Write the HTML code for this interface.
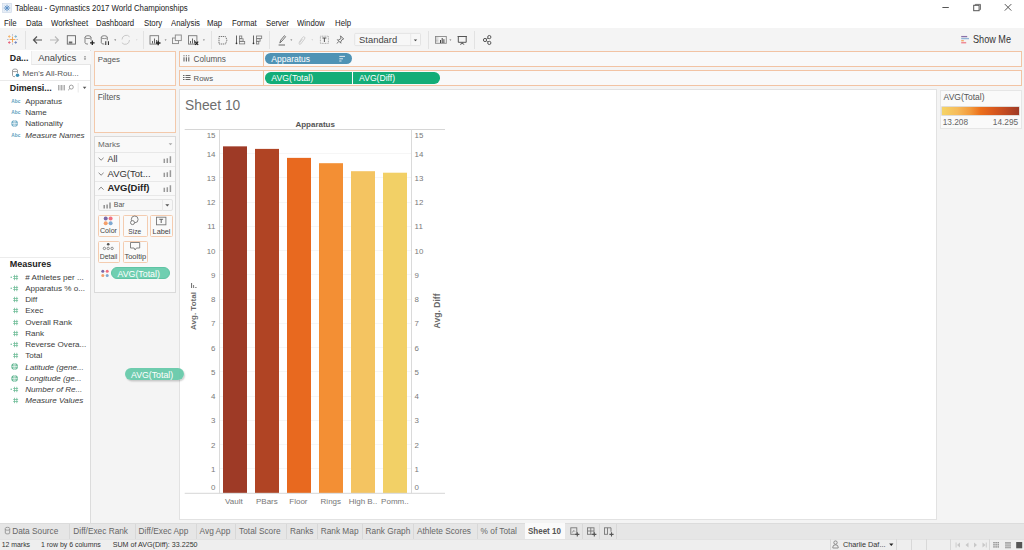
<!DOCTYPE html>
<html><head><meta charset="utf-8">
<style>
*{margin:0;padding:0;box-sizing:border-box}
html,body{width:1024px;height:550px;overflow:hidden;background:#fff;font-family:"Liberation Sans",sans-serif;color:#333}
.a{position:absolute;white-space:nowrap}
.t{position:absolute;white-space:nowrap;line-height:1}
</style></head><body>
<div class="a" style="left:0;top:0;width:1024px;height:550px;background:#fff" id="root">

<!-- title bar -->
<div class="t" style="left:14.6px;top:4px;font-size:9.2px;color:#222;transform:scaleX(0.848);transform-origin:0 0">Tableau - Gymnastics 2017 World Championships</div>

<!-- menu -->
<div class="t" style="left:4.4px;top:19px;font-size:9.2px;color:#222;transform:scaleX(0.848);transform-origin:0 0">File</div>
<div class="t" style="left:25.5px;top:19px;font-size:9.2px;color:#222;transform:scaleX(0.848);transform-origin:0 0">Data</div>
<div class="t" style="left:51px;top:19px;font-size:9.2px;color:#222;transform:scaleX(0.848);transform-origin:0 0">Worksheet</div>
<div class="t" style="left:96.3px;top:19px;font-size:9.2px;color:#222;transform:scaleX(0.848);transform-origin:0 0">Dashboard</div>
<div class="t" style="left:143.8px;top:19px;font-size:9.2px;color:#222;transform:scaleX(0.848);transform-origin:0 0">Story</div>
<div class="t" style="left:170.5px;top:19px;font-size:9.2px;color:#222;transform:scaleX(0.848);transform-origin:0 0">Analysis</div>
<div class="t" style="left:207.2px;top:19px;font-size:9.2px;color:#222;transform:scaleX(0.848);transform-origin:0 0">Map</div>
<div class="t" style="left:231.8px;top:19px;font-size:9.2px;color:#222;transform:scaleX(0.848);transform-origin:0 0">Format</div>
<div class="t" style="left:265.6px;top:19px;font-size:9.2px;color:#222;transform:scaleX(0.848);transform-origin:0 0">Server</div>
<div class="t" style="left:296.5px;top:19px;font-size:9.2px;color:#222;transform:scaleX(0.848);transform-origin:0 0">Window</div>
<div class="t" style="left:334.7px;top:19px;font-size:9.2px;color:#222;transform:scaleX(0.848);transform-origin:0 0">Help</div>

<!-- toolbar -->
<div class="a" style="left:0;top:28px;width:1024px;height:22px;background:#f4f4f4"></div>
<svg class="a" style="left:0;top:0" width="1024" height="50" viewBox="0 0 1024 50">
<!-- app icon -->
<rect x="2.5" y="3.5" width="9" height="9" fill="#e8eef6" stroke="#c9d6e6" stroke-width="0.6"/>
<g stroke="#5a8fc6" stroke-width="0.9" fill="none"><path d="M7 4.8v6.4M3.8 8h6.4M4.8 5.8l4.4 4.4M9.2 5.8l-4.4 4.4"/></g>
<!-- window controls -->
<path d="M942.4 7.5h6.4" stroke="#555" stroke-width="1"/>
<rect x="973.7" y="5.3" width="5.4" height="5.4" fill="none" stroke="#555" stroke-width="1"/>
<path d="M975.3 5.3v-0.9h5.2v5.2h-0.9" fill="none" stroke="#555" stroke-width="0.8"/>
<path d="M1004.8 4.1l6.5 6.5M1011.3 4.1l-6.5 6.5" stroke="#555" stroke-width="1"/>
<!-- separators -->
<g stroke="#e2e2e2" stroke-width="1"><path d="M25.5 31v18M143.5 31v18M211.5 31v18M269.5 31v18M428.5 31v18M474.5 31v18"/></g>
<!-- tableau logo -->
<g stroke-width="0.9" stroke-linecap="butt">
<path d="M12.5 36.6v5.8M9.6 39.5h5.8" stroke="#f0a04b"/>
<path d="M9.3 35.2v2.6M8 36.5h2.6" stroke="#f4b36b"/>
<path d="M15.7 35.2v2.6M14.4 36.5h2.6" stroke="#7cb3cf"/>
<path d="M9.3 41.2v2.6M8 42.5h2.6" stroke="#e8637a"/>
<path d="M15.7 41.2v2.6M14.4 42.5h2.6" stroke="#6c82bd"/>
<path d="M12.5 34.3v1.3M12.5 43.4v1.3M7.2 39.5h1.3M16.5 39.5h1.3" stroke="#9aa6c8"/>
</g>
<!-- back / forward -->
<path d="M42 40h-8.5M37 36.5l-3.5 3.5 3.5 3.5" fill="none" stroke="#555" stroke-width="1.2"/>
<path d="M50 40h8.5M55 36.5l3.5 3.5-3.5 3.5" fill="none" stroke="#b8b8b8" stroke-width="1.1"/>
<!-- save -->
<rect x="67.3" y="35.7" width="8.2" height="8.4" fill="none" stroke="#666" stroke-width="0.9"/>
<rect x="68.8" y="41.5" width="3.5" height="2" fill="#666"/>
<!-- new datasource -->
<path d="M85 37.3v5.5q0 1.3 3 1.3M85 37.3q0-1.6 3-1.6q3 0 3 1.6v3" fill="none" stroke="#777" stroke-width="0.9"/>
<path d="M85 37.3q0 1.3 3 1.3q3 0 3-1.3" fill="none" stroke="#777" stroke-width="0.8"/>
<path d="M92.3 40.5v4.6M90 42.8h4.6" stroke="#222" stroke-width="1.3"/>
<!-- pause datasource -->
<path d="M101.3 37.3v5.5q0 1.3 3 1.3M101.3 37.3q0-1.6 3-1.6q3 0 3 1.6v3" fill="none" stroke="#777" stroke-width="0.9"/>
<path d="M101.3 37.3q0 1.3 3 1.3q3 0 3-1.3" fill="none" stroke="#777" stroke-width="0.8"/>
<path d="M105.9 41.3v3.7M108.3 41.3v3.7" stroke="#222" stroke-width="1.2"/><path d="M107.1 41.3v3.7" stroke="#f4f4f4" stroke-width="1.1"/>
<path d="M114.2 39.5h2l-1 1.2z" fill="#555"/>
<!-- refresh -->
<path d="M122 39.5a4.3 4.3 0 0 1 7.6-2.7M129.5 40a4.3 4.3 0 0 1-7.6 2.8" fill="none" stroke="#c4c4c4" stroke-width="0.9"/>
<path d="M136 39.6h1.5l-.75.9z" fill="#c4c4c4"/>
<!-- new worksheet -->
<rect x="150" y="35.7" width="8.6" height="8.4" fill="none" stroke="#777" stroke-width="0.9"/>
<path d="M152.5 43.5v-2.5M154.5 43.5v-5M156.5 43.5v-3.5" stroke="#555" stroke-width="0.9"/>
<path d="M158.2 40.7v4.6M155.9 43h4.6" stroke="#222" stroke-width="1.3"/>
<path d="M164.6 39.5h2l-1 1.2z" fill="#666"/>
<!-- duplicate -->
<rect x="172.5" y="38" width="6" height="5.6" fill="#f4f4f4" stroke="#888" stroke-width="0.9"/>
<rect x="175.3" y="35" width="6" height="5.6" fill="#f4f4f4" stroke="#888" stroke-width="0.9"/>
<!-- clear sheet -->
<rect x="188.5" y="35.7" width="8.4" height="8.4" fill="none" stroke="#777" stroke-width="0.9"/>
<path d="M190.5 43.5v-2.5M192.5 43.5v-5M194.5 43.5v-3.5" stroke="#555" stroke-width="0.9"/>
<path d="M195 41.6l3.2 3.2M198.2 41.6l-3.2 3.2" stroke="#222" stroke-width="1.2"/>
<path d="M202.9 39.5h2l-1 1.2z" fill="#666"/>
<!-- swap -->
<path d="M219 36.5h6.5l1.5 3.5-1.5 4h-6.5z" fill="none" stroke="#777" stroke-width="1" stroke-dasharray="1.3 0.7"/>
<!-- sort asc -->
<path d="M236.5 35.5v7.8" stroke="#555" stroke-width="0.9"/><circle cx="236.5" cy="43.3" r="0.9" fill="#333"/>
<rect x="239.5" y="36" width="2.3" height="2.5" fill="none" stroke="#777" stroke-width="0.8"/>
<rect x="239.5" y="38.8" width="3.6" height="2.4" fill="none" stroke="#777" stroke-width="0.8"/>
<rect x="239.5" y="41.5" width="5.2" height="2.4" fill="none" stroke="#777" stroke-width="0.8"/>
<!-- sort desc -->
<path d="M253.5 35.5v7.8" stroke="#555" stroke-width="0.9"/><circle cx="253.5" cy="43.3" r="0.9" fill="#333"/>
<rect x="256.5" y="36" width="5.2" height="2.4" fill="none" stroke="#777" stroke-width="0.8"/>
<rect x="256.5" y="38.8" width="3.6" height="2.4" fill="none" stroke="#777" stroke-width="0.8"/>
<rect x="256.5" y="41.5" width="2.3" height="2.5" fill="none" stroke="#777" stroke-width="0.8"/>
<!-- highlight pen -->
<path d="M279.8 43l1-3 3.6-4.3 1.2 1-3.6 4.3z" fill="none" stroke="#666" stroke-width="0.9"/>
<path d="M278.6 45h6.4" stroke="#666" stroke-width="1"/>
<path d="M290.3 39.5h2l-1 1.2z" fill="#666"/>
<!-- paperclip -->
<path d="M299 42.5l3.5-5q1-1.3 2-.5q.9.8 0 2l-3.8 5q-.6.8-1.3.3q-.6-.5 0-1.3l3-4" fill="none" stroke="#c8c8c8" stroke-width="0.9"/>
<path d="M311.5 39.6h1.6l-.8.9z" fill="#bbb"/>
<!-- [T] -->
<rect x="320.4" y="36.2" width="8" height="7.2" fill="none" stroke="#999" stroke-width="0.8" stroke-dasharray="1 0.6"/>
<path d="M322.4 38h4M324.4 38v4" stroke="#444" stroke-width="0.9"/>
<!-- pin -->
<path d="M340.5 35.8l3.2 3.2-1.6.6-1.5 2.4.3 1.2-3.5-3.5 1.2.3 2.4-1.5z M338.5 41.5l-1.5 2" fill="none" stroke="#666" stroke-width="0.9"/>
<!-- Standard box -->
<rect x="354.7" y="33.4" width="65.8" height="12.2" rx="1" fill="#f7f7f7" stroke="#dedede" stroke-width="0.8"/>
<path d="M410.7 34v11" stroke="#e3e3e3" stroke-width="0.8"/>
<path d="M413.8 39.4h3.4l-1.7 1.8z" fill="#444"/>
<!-- presentation -->
<rect x="435.5" y="36.5" width="10.8" height="6.8" fill="none" stroke="#888" stroke-width="0.9"/>
<path d="M436.5 37.5v5M437.8 37.5v5" stroke="#999" stroke-width="0.7" stroke-dasharray="0.8 0.5"/>
<path d="M440.5 43v-3M442.2 43v-5M443.9 43v-3.8" stroke="#444" stroke-width="1"/>
<path d="M449.4 39.5h2l-1 1.2z" fill="#666"/>
<!-- present -->
<path d="M457.6 36.5h9.3M458.3 36.5v5.8h7.9v-5.8M462.2 42.3v1.3M460.2 44.4l2-1 2 1" fill="none" stroke="#555" stroke-width="1"/>
<!-- share -->
<circle cx="485" cy="40" r="1.6" fill="none" stroke="#555" stroke-width="1"/>
<circle cx="489.3" cy="37.1" r="1.6" fill="none" stroke="#555" stroke-width="1"/>
<circle cx="489.3" cy="42.9" r="1.6" fill="none" stroke="#555" stroke-width="1"/>
<path d="M486.4 39.1l1.5-1M486.4 40.9l1.5 1" stroke="#555" stroke-width="0.9"/>
<!-- show me -->
<path d="M961.2 36.6h6" stroke="#8a70a8" stroke-width="1.3"/>
<path d="M961.2 38.6h7.8" stroke="#93b6d8" stroke-width="1.3"/>
<path d="M961.2 40.7h2.6" stroke="#f2a764" stroke-width="1.3"/>
<path d="M961.2 42.7h5" stroke="#ef8b97" stroke-width="1.5"/>
</svg>
<div class="t" style="left:359.1px;top:35px;font-size:9.4px;color:#444">Standard</div>
<div class="t" style="left:972.7px;top:35px;font-size:10.3px;color:#333;transform:scaleX(0.885);transform-origin:0 0">Show Me</div>

<!-- left panel -->
<div class="a" style="left:0;top:50px;width:91px;height:473px;background:#fff;border-right:1px solid #dcdcdc"></div>

<div class="a" style="left:31px;top:51px;width:60px;height:14px;background:#f7f7f7;border-left:1px solid #ececec;border-bottom:1px solid #e6e6e6"></div>
<div class="t" style="left:9.8px;top:54px;font-size:8.8px;color:#222;font-weight:bold">Da...</div>
<div class="t" style="left:38.2px;top:53px;font-size:9.5px;color:#444;">Analytics</div>
<svg class="a" style="left:82.5px;top:54.5px" width="5" height="6"><path d="M0.8 2.3L2 1 3.2 2.3z M0.8 3.6L2 4.9 3.2 3.6z" fill="#666"/></svg>
<svg class="a" style="left:11px;top:68px" width="9" height="10"><path d="M1.5 2.5v5q0 1.2 2.5 1.2M1.5 2.5q0-1.5 2.5-1.5q2.5 0 2.5 1.5v2.5M1.5 2.5q0 1.2 2.5 1.2q2.5 0 2.5-1.2" fill="none" stroke="#888" stroke-width="0.8"/><circle cx="6.5" cy="7.2" r="1.8" fill="#3d8fb4"/></svg>
<div class="t" style="left:22.6px;top:70px;font-size:8.05px;color:#555;">Men's All-Rou...</div>
<div class="a" style="left:0;top:80px;width:90px;height:1px;background:#eaeaea"></div>
<div class="t" style="left:9.8px;top:84px;font-size:8.9px;color:#222;font-weight:bold">Dimensi...</div>
<svg class="a" style="left:56px;top:83px" width="34" height="10"><path d="M2.5 2v5.4M4 2v5.4M5.5 2v5.4M7 2v5.4M8.5 2v5.4" stroke="#999" stroke-width="0.8"/><circle cx="15.3" cy="4.1" r="2" fill="none" stroke="#888" stroke-width="0.8"/><path d="M13.8 5.6l-1.6 1.6" stroke="#888" stroke-width="0.9"/><path d="M22.2 0v9.5" stroke="#e3e3e3" stroke-width="0.8"/><path d="M26.8 3.8h3.6l-1.8 2.2z" fill="#555"/></svg>
<svg class="a" style="left:10.5px;top:98.0px" width="10" height="6"><text x="0.3" y="4.8" font-family="Liberation Sans" font-size="5.4" font-weight="bold" fill="#5f9fbe" textLength="9" lengthAdjust="spacingAndGlyphs">Abc</text></svg>
<div class="t" style="left:25.2px;top:98px;font-size:8.1px;color:#3c3c3c;">Apparatus</div>
<svg class="a" style="left:10.5px;top:109.3px" width="10" height="6"><text x="0.3" y="4.8" font-family="Liberation Sans" font-size="5.4" font-weight="bold" fill="#5f9fbe" textLength="9" lengthAdjust="spacingAndGlyphs">Abc</text></svg>
<div class="t" style="left:25.2px;top:109px;font-size:8.1px;color:#3c3c3c;">Name</div>
<svg class="a" style="left:11px;top:120.0px" width="8" height="8"><circle cx="3.6" cy="3.6" r="3.3" fill="#6aa9c4"/><path d="M0.6 3.6h6M3.6 0.6v6" stroke="#fff" stroke-width="0.6"/><ellipse cx="3.6" cy="3.6" rx="1.4" ry="3.2" fill="none" stroke="#fff" stroke-width="0.5"/></svg>
<div class="t" style="left:25.2px;top:120px;font-size:8.1px;color:#3c3c3c;">Nationality</div>
<svg class="a" style="left:10.5px;top:131.5px" width="10" height="6"><text x="0.3" y="4.8" font-family="Liberation Sans" font-size="5.4" font-weight="bold" fill="#5f9fbe" textLength="9" lengthAdjust="spacingAndGlyphs">Abc</text></svg>
<div class="t" style="left:25.2px;top:132px;font-size:8.1px;color:#3c3c3c;font-style:italic">Measure Names</div>
<div class="a" style="left:0;top:257px;width:90px;height:1px;background:#ececec"></div>
<div class="t" style="left:9.8px;top:260px;font-size:9.0px;color:#222;font-weight:bold">Measures</div>
<svg class="a" style="left:10px;top:273.5px" width="10" height="7"><g stroke="#6cbb96" stroke-width="0.75"><path d="M4.5 0.8v5.4M6.8 0.8v5.4M3.2 2.5h4.9M3.2 4.5h4.9"/></g><circle cx="1.2" cy="3.3" r="0.7" fill="#5fb590"/></svg>
<div class="t" style="left:25.2px;top:274px;font-size:8.1px;color:#3c3c3c;"># Athletes per ...</div>
<svg class="a" style="left:10px;top:284.75px" width="10" height="7"><g stroke="#6cbb96" stroke-width="0.75"><path d="M4.5 0.8v5.4M6.8 0.8v5.4M3.2 2.5h4.9M3.2 4.5h4.9"/></g><circle cx="1.2" cy="3.3" r="0.7" fill="#5fb590"/></svg>
<div class="t" style="left:25.2px;top:285px;font-size:8.1px;color:#3c3c3c;">Apparatus % o...</div>
<svg class="a" style="left:10px;top:296.0px" width="10" height="7"><g stroke="#6cbb96" stroke-width="0.75"><path d="M4.5 0.8v5.4M6.8 0.8v5.4M3.2 2.5h4.9M3.2 4.5h4.9"/></g></svg>
<div class="t" style="left:25.2px;top:296px;font-size:8.1px;color:#3c3c3c;">Diff</div>
<svg class="a" style="left:10px;top:307.25px" width="10" height="7"><g stroke="#6cbb96" stroke-width="0.75"><path d="M4.5 0.8v5.4M6.8 0.8v5.4M3.2 2.5h4.9M3.2 4.5h4.9"/></g></svg>
<div class="t" style="left:25.2px;top:307px;font-size:8.1px;color:#3c3c3c;">Exec</div>
<svg class="a" style="left:10px;top:318.5px" width="10" height="7"><g stroke="#6cbb96" stroke-width="0.75"><path d="M4.5 0.8v5.4M6.8 0.8v5.4M3.2 2.5h4.9M3.2 4.5h4.9"/></g></svg>
<div class="t" style="left:25.2px;top:319px;font-size:8.1px;color:#3c3c3c;">Overall Rank</div>
<svg class="a" style="left:10px;top:329.75px" width="10" height="7"><g stroke="#6cbb96" stroke-width="0.75"><path d="M4.5 0.8v5.4M6.8 0.8v5.4M3.2 2.5h4.9M3.2 4.5h4.9"/></g></svg>
<div class="t" style="left:25.2px;top:330px;font-size:8.1px;color:#3c3c3c;">Rank</div>
<svg class="a" style="left:10px;top:341.0px" width="10" height="7"><g stroke="#6cbb96" stroke-width="0.75"><path d="M4.5 0.8v5.4M6.8 0.8v5.4M3.2 2.5h4.9M3.2 4.5h4.9"/></g><circle cx="1.2" cy="3.3" r="0.7" fill="#5fb590"/></svg>
<div class="t" style="left:25.2px;top:341px;font-size:8.1px;color:#3c3c3c;">Reverse Overa...</div>
<svg class="a" style="left:10px;top:352.25px" width="10" height="7"><g stroke="#6cbb96" stroke-width="0.75"><path d="M4.5 0.8v5.4M6.8 0.8v5.4M3.2 2.5h4.9M3.2 4.5h4.9"/></g></svg>
<div class="t" style="left:25.2px;top:352px;font-size:8.1px;color:#3c3c3c;">Total</div>
<svg class="a" style="left:11px;top:363.29999999999995px" width="8" height="8"><circle cx="3.6" cy="3.6" r="3.3" fill="#5fb590"/><path d="M0.6 3.6h6M3.6 0.6v6" stroke="#fff" stroke-width="0.6"/><ellipse cx="3.6" cy="3.6" rx="1.4" ry="3.2" fill="none" stroke="#fff" stroke-width="0.5"/></svg>
<div class="t" style="left:25.2px;top:364px;font-size:8.1px;color:#3c3c3c;font-style:italic">Latitude (gene...</div>
<svg class="a" style="left:11px;top:374.54999999999995px" width="8" height="8"><circle cx="3.6" cy="3.6" r="3.3" fill="#5fb590"/><path d="M0.6 3.6h6M3.6 0.6v6" stroke="#fff" stroke-width="0.6"/><ellipse cx="3.6" cy="3.6" rx="1.4" ry="3.2" fill="none" stroke="#fff" stroke-width="0.5"/></svg>
<div class="t" style="left:25.2px;top:375px;font-size:8.1px;color:#3c3c3c;font-style:italic">Longitude (ge...</div>
<svg class="a" style="left:10px;top:386.0px" width="10" height="7"><g stroke="#6cbb96" stroke-width="0.75"><path d="M4.5 0.8v5.4M6.8 0.8v5.4M3.2 2.5h4.9M3.2 4.5h4.9"/></g><circle cx="1.2" cy="3.3" r="0.7" fill="#5fb590"/></svg>
<div class="t" style="left:25.2px;top:386px;font-size:8.1px;color:#3c3c3c;font-style:italic">Number of Re...</div>
<svg class="a" style="left:10px;top:397.25px" width="10" height="7"><g stroke="#6cbb96" stroke-width="0.75"><path d="M4.5 0.8v5.4M6.8 0.8v5.4M3.2 2.5h4.9M3.2 4.5h4.9"/></g></svg>
<div class="t" style="left:25.2px;top:397px;font-size:8.1px;color:#3c3c3c;font-style:italic">Measure Values</div>
<!-- shelves column -->
<div class="a" style="left:91px;top:50px;width:88px;height:473px;background:#f4f4f4"></div>
<div class="a" style="left:94px;top:51px;width:82px;height:35px;background:#f9f9f9;border:1px solid #f3c9ab"></div>
<div class="t" style="left:97.7px;top:56px;font-size:7.9px;color:#555;">Pages</div>
<div class="a" style="left:94px;top:89px;width:82px;height:44px;background:#f9f9f9;border:1px solid #f3c9ab"></div>
<div class="t" style="left:97.7px;top:93px;font-size:8.3px;color:#555;">Filters</div>
<div class="a" style="left:94px;top:136px;width:82px;height:157px;background:#f9f9f9;border:1px solid #dadada"></div>
<div class="t" style="left:98px;top:141px;font-size:8.1px;color:#666;">Marks</div>
<svg class="a" style="left:168px;top:142px" width="6" height="4"><path d="M0.6 1.2h3.8l-1.9 2z" fill="#aaa"/></svg>
<div class="a" style="left:95px;top:152.0px;width:80px;height:1px;background:#e8e8e8"></div>
<div class="a" style="left:95px;top:166.0px;width:80px;height:1px;background:#e8e8e8"></div>
<div class="a" style="left:95px;top:181.0px;width:80px;height:1px;background:#e8e8e8"></div>
<div class="a" style="left:95px;top:194.8px;width:80px;height:1px;background:#e8e8e8"></div>
<svg class="a" style="left:98px;top:157px" width="7" height="5"><path d="M0.6 0.8l2.5 2.4 2.5-2.4" fill="none" stroke="#777" stroke-width="0.9"/></svg>
<div class="t" style="left:107.5px;top:155px;font-size:8.9px;color:#333;">All</div>
<svg class="a" style="left:162.5px;top:155.5px" width="9" height="8"><path d="M1.3 7v-4.2M4.3 7v-4.8M7.4 7v-6.8" stroke="#999" stroke-width="1.5"/></svg>
<svg class="a" style="left:98px;top:171.5px" width="7" height="5"><path d="M0.6 0.8l2.5 2.4 2.5-2.4" fill="none" stroke="#777" stroke-width="0.9"/></svg>
<div class="t" style="left:107.5px;top:169px;font-size:9.5px;color:#333;">AVG(Tot...</div>
<svg class="a" style="left:162.5px;top:170px" width="9" height="8"><path d="M1.3 7v-4.2M4.3 7v-4.8M7.4 7v-6.8" stroke="#999" stroke-width="1.5"/></svg>
<svg class="a" style="left:98px;top:186px" width="7" height="5"><path d="M0.6 3.6l2.5-2.4 2.5 2.4" fill="none" stroke="#777" stroke-width="0.9"/></svg>
<div class="t" style="left:107.5px;top:183px;font-size:9.5px;color:#222;font-weight:bold">AVG(Diff)</div>
<svg class="a" style="left:162.5px;top:184.5px" width="9" height="8"><path d="M1.3 7v-4.2M4.3 7v-4.8M7.4 7v-6.8" stroke="#999" stroke-width="1.5"/></svg>
<div class="a" style="left:97.7px;top:198.8px;width:75px;height:12.6px;background:#f7f7f7;border:1px solid #e3e3e3;border-radius:2px"></div>
<div class="a" style="left:162px;top:199.5px;width:1px;height:11px;background:#e8e8e8"></div>
<svg class="a" style="left:165px;top:203.5px" width="5" height="3"><path d="M0.3 0.3h4l-2 2.2z" fill="#555"/></svg>
<svg class="a" style="left:102.7px;top:201.5px" width="9" height="7"><path d="M1.2 6.6v-3.6M4.1 6.6v-4M7 6.6v-6" stroke="#888" stroke-width="1.4"/></svg>
<div class="t" style="left:113.8px;top:201px;font-size:7.0px;color:#555;">Bar</div>
<div class="a" style="left:97.5px;top:214.5px;width:22.099999999999994px;height:22.0px;border:1px solid #f4ccb0;border-radius:1.5px;background:#fafafa"></div>
<div class="a" style="left:122.5px;top:214.5px;width:25.0px;height:22.0px;border:1px solid #f4ccb0;border-radius:1.5px;background:#fafafa"></div>
<div class="a" style="left:150.2px;top:214.5px;width:22.400000000000006px;height:22.0px;border:1px solid #f4ccb0;border-radius:1.5px;background:#fafafa"></div>
<div class="a" style="left:97.5px;top:240.5px;width:22.099999999999994px;height:22.0px;border:1px solid #f4ccb0;border-radius:1.5px;background:#fafafa"></div>
<div class="a" style="left:122.5px;top:240.5px;width:25.0px;height:22.0px;border:1px solid #f4ccb0;border-radius:1.5px;background:#fafafa"></div>
<svg class="a" style="left:100px;top:214px" width="16" height="12"><circle cx="5.7" cy="4.4" r="2" fill="#7b68a6"/><circle cx="10.6" cy="4.4" r="2" fill="#f06f80"/><circle cx="5.7" cy="9.2" r="2" fill="#f4a06b"/><circle cx="10.6" cy="9.2" r="2" fill="#7ea8d1"/></svg>
<div class="t" style="left:100px;top:228px;font-size:7.1px;color:#444;">Color</div>
<svg class="a" style="left:127px;top:214px" width="14" height="12"><circle cx="7.7" cy="5.4" r="3.4" fill="none" stroke="#666" stroke-width="0.8"/><circle cx="5.5" cy="8.6" r="2" fill="#fafafa" stroke="#666" stroke-width="0.8"/></svg>
<div class="t" style="left:128.3px;top:229px;font-size:6.6px;color:#444;">Size</div>
<svg class="a" style="left:155px;top:215px" width="12" height="11"><rect x="1.5" y="2.2" width="9.4" height="7.6" fill="none" stroke="#777" stroke-width="0.9"/><path d="M4.3 4.3h3.8M6.2 4.3v3.7" stroke="#555" stroke-width="0.9"/></svg>
<div class="t" style="left:152.6px;top:228px;font-size:7.3px;color:#444;">Label</div>
<svg class="a" style="left:101px;top:241px" width="14" height="10"><circle cx="7.2" cy="3.3" r="1.3" fill="#555"/><circle cx="3.4" cy="7.4" r="1.2" fill="none" stroke="#666" stroke-width="0.7"/><circle cx="7.2" cy="7.4" r="1.2" fill="none" stroke="#666" stroke-width="0.7"/><circle cx="11.1" cy="7.4" r="1.2" fill="none" stroke="#666" stroke-width="0.7"/></svg>
<div class="t" style="left:99.7px;top:254px;font-size:6.9px;color:#444;">Detail</div>
<svg class="a" style="left:129px;top:241px" width="12" height="11"><path d="M1.5 1.5h9.2v5.5h-3.3l-1.3 2-1-2h-3.6z" fill="none" stroke="#777" stroke-width="0.9"/></svg>
<div class="t" style="left:124.4px;top:253px;font-size:7.5px;color:#444;">Tooltip</div>
<svg class="a" style="left:100px;top:268px" width="10" height="10"><circle cx="2.8" cy="3.2" r="1.5" fill="#7b68a6"/><circle cx="7.2" cy="3.2" r="1.5" fill="#f06f80"/><circle cx="2.8" cy="7.4" r="1.5" fill="#f4a06b"/><circle cx="7.2" cy="7.4" r="1.5" fill="#7ea8d1"/></svg>
<div class="a" style="left:110.8px;top:267px;width:59.6px;height:12.2px;background:#70cfb1;border:1px solid #5fc4a4;border-radius:6.1px"></div>
<div class="t" style="left:117.5px;top:270px;font-size:8.8px;color:#fff;">AVG(Total)</div>
<!-- columns / rows shelves -->
<div class="a" style="left:179px;top:50px;width:845px;height:473px;background:#f4f4f4"></div>
<div class="a" style="left:179px;top:50.5px;width:843px;height:16px;background:#f9f9f9;border:1px solid #f2c3a3"></div>
<div class="a" style="left:179px;top:70px;width:843px;height:16px;background:#f9f9f9;border:1px solid #f2c3a3"></div>
<div class="a" style="left:263px;top:51px;width:1px;height:15px;background:#f2c3a3"></div>
<div class="a" style="left:263px;top:70.5px;width:1px;height:15px;background:#f2c3a3"></div>
<svg class="a" style="left:182px;top:54px" width="10" height="10"><path d="M2 3.3v4.2M4.4 3.3v4.2M6.8 3.3v4.2" stroke="#666" stroke-width="1.1"/><path d="M2 1.3v1M4.4 1.3v1M6.8 1.3v1" stroke="#666" stroke-width="1.1"/></svg>
<div class="t" style="left:193.6px;top:56px;font-size:8.2px;color:#555;">Columns</div>
<svg class="a" style="left:182px;top:73px" width="10" height="9"><path d="M1 2.5h1.5M1 4.5h1.5M1 6.5h1.5M3.5 2.5h5M3.5 4.5h5M3.5 6.5h5" stroke="#666" stroke-width="1"/></svg>
<div class="t" style="left:193.6px;top:75px;font-size:7.8px;color:#555;">Rows</div>
<div class="a" style="left:264.8px;top:53px;width:87.1px;height:11.4px;background:#4f93b5;border-radius:5.7px"></div>
<div class="t" style="left:271.3px;top:55px;font-size:8.5px;color:#fff;">Apparatus</div>
<svg class="a" style="left:338px;top:55px" width="8" height="8"><path d="M1.3 1.4h5.7M1.3 3.8h3.7M1.3 6h2.2" stroke="#fff" stroke-width="0.9" opacity="0.9"/></svg>
<div class="a" style="left:264.8px;top:72px;width:87.1px;height:11.5px;background:#13ad78;border-radius:5.75px 0 0 5.75px"></div>
<div class="a" style="left:353px;top:72px;width:86.7px;height:11.5px;background:#13ad78;border-radius:0 5.75px 5.75px 0"></div>
<div class="t" style="left:271.3px;top:74px;font-size:8.7px;color:#fff;">AVG(Total)</div>
<div class="t" style="left:359.1px;top:74px;font-size:8.6px;color:#fff;">AVG(Diff)</div>
<!-- sheet -->
<div class="a" style="left:179px;top:89px;width:758px;height:431px;background:#fff;border:1px solid #e2e2e2"></div>
<div class="t" style="left:185px;top:99px;font-size:13.8px;color:#6e6e6e;">Sheet 10</div>
<div class="t" style="left:295.4px;top:121px;font-size:8.0px;color:#555;font-weight:bold">Apparatus</div>
<svg class="a" style="left:0;top:0" width="1024" height="550">
<path d="M220 468.5h191" stroke="#f6f6f6" stroke-width="1"/>
<path d="M220 444.5h191" stroke="#f6f6f6" stroke-width="1"/>
<path d="M220 420.5h191" stroke="#f6f6f6" stroke-width="1"/>
<path d="M220 396.5h191" stroke="#f6f6f6" stroke-width="1"/>
<path d="M220 371.5h191" stroke="#f6f6f6" stroke-width="1"/>
<path d="M220 347.5h191" stroke="#f6f6f6" stroke-width="1"/>
<path d="M220 323.5h191" stroke="#f6f6f6" stroke-width="1"/>
<path d="M220 299.5h191" stroke="#f6f6f6" stroke-width="1"/>
<path d="M220 274.5h191" stroke="#f6f6f6" stroke-width="1"/>
<path d="M220 250.5h191" stroke="#f6f6f6" stroke-width="1"/>
<path d="M220 226.5h191" stroke="#f6f6f6" stroke-width="1"/>
<path d="M220 202.5h191" stroke="#f6f6f6" stroke-width="1"/>
<path d="M220 177.5h191" stroke="#f6f6f6" stroke-width="1"/>
<path d="M220 153.5h191" stroke="#f6f6f6" stroke-width="1"/>
<rect x="223" y="146.35" width="24" height="346.65" fill="#9e3a26"/>
<rect x="255" y="148.89" width="24" height="344.11" fill="#b04424"/>
<rect x="287" y="157.87" width="24" height="335.13" fill="#e8691f"/>
<rect x="319" y="163.20" width="24" height="329.80" fill="#f38f34"/>
<rect x="351" y="171.20" width="24" height="321.80" fill="#f4c461"/>
<rect x="383" y="172.71" width="24" height="320.29" fill="#f2d066"/>
<path d="M184.7 129.5h260.3M184.7 493.3h260.3" stroke="#d6d6d6" stroke-width="1"/>
<path d="M219.5 129.5v364M411.5 129.5v364" stroke="#dadada" stroke-width="1"/>
</svg>
<div class="t" style="left:190px;width:25.5px;text-align:right;top:484px;font-size:7.9px;color:#7a7a7a">0</div>
<div class="t" style="left:414.6px;top:484px;font-size:7.9px;color:#7a7a7a">0</div>
<div class="t" style="left:190px;width:25.5px;text-align:right;top:466px;font-size:7.9px;color:#7a7a7a">1</div>
<div class="t" style="left:414.6px;top:466px;font-size:7.9px;color:#7a7a7a">1</div>
<div class="t" style="left:190px;width:25.5px;text-align:right;top:442px;font-size:7.9px;color:#7a7a7a">2</div>
<div class="t" style="left:414.6px;top:442px;font-size:7.9px;color:#7a7a7a">2</div>
<div class="t" style="left:190px;width:25.5px;text-align:right;top:417px;font-size:7.9px;color:#7a7a7a">3</div>
<div class="t" style="left:414.6px;top:417px;font-size:7.9px;color:#7a7a7a">3</div>
<div class="t" style="left:190px;width:25.5px;text-align:right;top:393px;font-size:7.9px;color:#7a7a7a">4</div>
<div class="t" style="left:414.6px;top:393px;font-size:7.9px;color:#7a7a7a">4</div>
<div class="t" style="left:190px;width:25.5px;text-align:right;top:369px;font-size:7.9px;color:#7a7a7a">5</div>
<div class="t" style="left:414.6px;top:369px;font-size:7.9px;color:#7a7a7a">5</div>
<div class="t" style="left:190px;width:25.5px;text-align:right;top:345px;font-size:7.9px;color:#7a7a7a">6</div>
<div class="t" style="left:414.6px;top:345px;font-size:7.9px;color:#7a7a7a">6</div>
<div class="t" style="left:190px;width:25.5px;text-align:right;top:320px;font-size:7.9px;color:#7a7a7a">7</div>
<div class="t" style="left:414.6px;top:320px;font-size:7.9px;color:#7a7a7a">7</div>
<div class="t" style="left:190px;width:25.5px;text-align:right;top:296px;font-size:7.9px;color:#7a7a7a">8</div>
<div class="t" style="left:414.6px;top:296px;font-size:7.9px;color:#7a7a7a">8</div>
<div class="t" style="left:190px;width:25.5px;text-align:right;top:272px;font-size:7.9px;color:#7a7a7a">9</div>
<div class="t" style="left:414.6px;top:272px;font-size:7.9px;color:#7a7a7a">9</div>
<div class="t" style="left:190px;width:25.5px;text-align:right;top:248px;font-size:7.9px;color:#7a7a7a">10</div>
<div class="t" style="left:414.6px;top:248px;font-size:7.9px;color:#7a7a7a">10</div>
<div class="t" style="left:190px;width:25.5px;text-align:right;top:223px;font-size:7.9px;color:#7a7a7a">11</div>
<div class="t" style="left:414.6px;top:223px;font-size:7.9px;color:#7a7a7a">11</div>
<div class="t" style="left:190px;width:25.5px;text-align:right;top:199px;font-size:7.9px;color:#7a7a7a">12</div>
<div class="t" style="left:414.6px;top:199px;font-size:7.9px;color:#7a7a7a">12</div>
<div class="t" style="left:190px;width:25.5px;text-align:right;top:175px;font-size:7.9px;color:#7a7a7a">13</div>
<div class="t" style="left:414.6px;top:175px;font-size:7.9px;color:#7a7a7a">13</div>
<div class="t" style="left:190px;width:25.5px;text-align:right;top:151px;font-size:7.9px;color:#7a7a7a">14</div>
<div class="t" style="left:414.6px;top:151px;font-size:7.9px;color:#7a7a7a">14</div>
<div class="t" style="left:190px;width:25.5px;text-align:right;top:132px;font-size:7.9px;color:#7a7a7a">15</div>
<div class="t" style="left:414.6px;top:132px;font-size:7.9px;color:#7a7a7a">15</div>
<div class="t" style="left:225.1px;top:498px;font-size:8.0px;color:#777;">Vault</div>
<div class="t" style="left:256px;top:498px;font-size:8.0px;color:#777;">PBars</div>
<div class="t" style="left:289.3px;top:498px;font-size:8.0px;color:#777;">Floor</div>
<div class="t" style="left:320.6px;top:498px;font-size:8.0px;color:#777;">Rings</div>
<div class="t" style="left:348.7px;top:498px;font-size:8.0px;color:#777;">High B..</div>
<div class="t" style="left:381.1px;top:498px;font-size:8.0px;color:#777;">Pomm..</div>
<div class="t" style="left:194.4px;top:311px;font-size:8px;color:#6a6a6a;font-weight:bold;transform:translate(-50%,-50%) rotate(-90deg)">Avg. Total</div>
<svg class="a" style="left:190px;top:282px" width="8" height="7"><rect x="1" y="1" width="1.1" height="5" fill="#777"/><rect x="3" y="3" width="1.1" height="3" fill="#888"/><rect x="4.9" y="5" width="1.8" height="1" fill="#999"/></svg>
<div class="t" style="left:436.5px;top:310.5px;font-size:8.6px;color:#6a6a6a;font-weight:bold;transform:translate(-50%,-50%) rotate(-90deg)">Avg. Diff</div>
<!-- legend -->
<div class="a" style="left:939.5px;top:89.5px;width:82.3px;height:39.3px;background:#fafafa;border:1px solid #e6e6e6"></div>
<div class="t" style="left:943.6px;top:93px;font-size:8.5px;color:#555;">AVG(Total)</div>
<div class="a" style="left:942.3px;top:107.2px;width:76.8px;height:8.3px;background:linear-gradient(to right,#f5d466 0%,#f6bb5b 20%,#f39c3d 36%,#ec701c 50%,#dc5c1e 65%,#c24b22 82%,#9e3a26 100%);box-shadow:0 0 0 0.6px rgba(120,110,90,0.35)"></div>
<div class="t" style="left:942.7px;top:118px;font-size:8.3px;color:#666;">13.208</div>
<div class="t" style="left:980px;width:38.2px;text-align:right;top:118px;font-size:8.3px;color:#666">14.295</div>
<!-- tab bar -->
<div class="a" style="left:0;top:522.5px;width:1024px;height:16.5px;background:#e6e6e6;border-top:1px solid #dcdcdc"></div>
<div class="a" style="left:0;top:538.5px;width:1024px;height:11.5px;background:#eeeeee;border-top:1px solid #e2e2e2"></div>
<div class="a" style="left:524.9px;top:523.4px;width:40px;height:15.6px;background:#fafafa"></div>
<div class="a" style="left:68.9px;top:523.5px;width:1px;height:15px;background:#d8d8d8"></div>
<div class="a" style="left:134.8px;top:523.5px;width:1px;height:15px;background:#d8d8d8"></div>
<div class="a" style="left:195.8px;top:523.5px;width:1px;height:15px;background:#d8d8d8"></div>
<div class="a" style="left:234.7px;top:523.5px;width:1px;height:15px;background:#d8d8d8"></div>
<div class="a" style="left:286.2px;top:523.5px;width:1px;height:15px;background:#d8d8d8"></div>
<div class="a" style="left:316.9px;top:523.5px;width:1px;height:15px;background:#d8d8d8"></div>
<div class="a" style="left:361.8px;top:523.5px;width:1px;height:15px;background:#d8d8d8"></div>
<div class="a" style="left:413.2px;top:523.5px;width:1px;height:15px;background:#d8d8d8"></div>
<div class="a" style="left:476.6px;top:523.5px;width:1px;height:15px;background:#d8d8d8"></div>
<div class="a" style="left:582.0px;top:523.5px;width:1px;height:15px;background:#d8d8d8"></div>
<div class="a" style="left:598.8px;top:523.5px;width:1px;height:15px;background:#d8d8d8"></div>
<div class="a" style="left:616.2px;top:523.5px;width:1px;height:15px;background:#d8d8d8"></div>
<svg class="a" style="left:4px;top:526px" width="8" height="9"><path d="M1.3 2.4v4.8q0 .7 2.2 .7q2.2 0 2.2-.7v-4.8q0-1.1-2.2-1.1q-2.2 0-2.2 1.1zM1.3 3.4q0 .8 2.2 .8q2.2 0 2.2-.8" fill="none" stroke="#888" stroke-width="0.8"/></svg>
<div class="t" style="left:12.2px;top:527px;font-size:8.3px;color:#666;">Data Source</div>
<div class="t" style="left:73.3px;top:527px;font-size:8.3px;color:#666;">Diff/Exec Rank</div>
<div class="t" style="left:138.6px;top:527px;font-size:8.3px;color:#666;">Diff/Exec App</div>
<div class="t" style="left:199.6px;top:527px;font-size:8.3px;color:#666;">Avg App</div>
<div class="t" style="left:239.1px;top:527px;font-size:8.3px;color:#666;">Total Score</div>
<div class="t" style="left:290px;top:527px;font-size:8.3px;color:#666;">Ranks</div>
<div class="t" style="left:320.7px;top:527px;font-size:8.3px;color:#666;">Rank Map</div>
<div class="t" style="left:365.6px;top:527px;font-size:8.3px;color:#666;">Rank Graph</div>
<div class="t" style="left:417px;top:527px;font-size:8.3px;color:#666;">Athlete Scores</div>
<div class="t" style="left:480.6px;top:527px;font-size:8.3px;color:#666;">% of Total</div>
<div class="t" style="left:527.8px;top:527px;font-size:9.2px;color:#555;font-weight:bold;transform:scaleX(0.87);transform-origin:0 0">Sheet 10</div>
<svg class="a" style="left:568px;top:526px" width="50" height="12"><g fill="none" stroke="#777" stroke-width="0.9"><rect x="2.8" y="1.8" width="6" height="6.5"/><path d="M4.3 6.5l1.5-2 1 1"/><rect x="19.5" y="1.8" width="6.5" height="6.5"/><path d="M22.75 1.8v6.5M19.5 5h6.5"/><rect x="36.5" y="1.8" width="3" height="6.5"/><path d="M39.5 1.8h3.5v4"/></g><g stroke="#555" stroke-width="1.1"><path d="M9.3 6.3v4.2M7.2 8.4h4.2M26.3 6.3v4.2M24.2 8.4h4.2M43.5 6.3v4.2M41.4 8.4h4.2"/></g></svg>
<div class="t" style="left:1.7px;top:542px;font-size:6.9px;color:#333;">12 marks</div>
<div class="t" style="left:41px;top:542px;font-size:6.95px;color:#333;">1 row by 6 columns</div>
<div class="t" style="left:112.7px;top:542px;font-size:7.14px;color:#333;">SUM of AVG(Diff): 33.2250</div>
<div class="a" style="left:829.5px;top:539px;width:1px;height:11px;background:#d8d8d8"></div>
<div class="a" style="left:896.2px;top:539px;width:1px;height:11px;background:#d8d8d8"></div>
<div class="a" style="left:911.1px;top:539px;width:1px;height:11px;background:#d8d8d8"></div>
<div class="a" style="left:926.1px;top:539px;width:1px;height:11px;background:#d8d8d8"></div>
<div class="a" style="left:950.0px;top:539px;width:1px;height:11px;background:#d8d8d8"></div>
<div class="a" style="left:988.8px;top:539px;width:1px;height:11px;background:#d8d8d8"></div>
<svg class="a" style="left:832px;top:540px" width="8" height="9"><circle cx="3.5" cy="2.6" r="1.7" fill="none" stroke="#777" stroke-width="0.8"/><path d="M0.8 8v-0.8q0-2.4 2.7-2.4q2.7 0 2.7 2.4v0.8z" fill="none" stroke="#777" stroke-width="0.8"/></svg>
<div class="t" style="left:842.9px;top:541px;font-size:7.3px;color:#333;">Charlie Daf...</div>
<svg class="a" style="left:889px;top:542.5px" width="5" height="4"><path d="M0.2 0.5h4.2l-2.1 2.6z" fill="#222"/></svg>
<svg class="a" style="left:950px;top:540px" width="74" height="10"><g fill="#c8c8c8"><path d="M7 5l3-2.5v5z"/><rect x="5.6" y="2.5" width="0.9" height="5"/><path d="M15.5 5l3-2.5v5z"/><path d="M27 5l-3-2.5v5z"/><path d="M32.5 5l3-2.5v5z" transform="rotate(180 34 5)"/><rect x="35.8" y="2.5" width="0.9" height="5"/></g><g fill="#888"><rect x="43.3" y="2.0" width="1.4" height="1.4"/><rect x="43.3" y="4.1" width="1.4" height="1.4"/><rect x="43.3" y="6.2" width="1.4" height="1.4"/><rect x="45.4" y="2.0" width="1.4" height="1.4"/><rect x="45.4" y="4.1" width="1.4" height="1.4"/><rect x="45.4" y="6.2" width="1.4" height="1.4"/><rect x="47.5" y="2.0" width="1.4" height="1.4"/><rect x="47.5" y="4.1" width="1.4" height="1.4"/><rect x="47.5" y="6.2" width="1.4" height="1.4"/></g><rect x="55" y="2" width="6" height="6.3" fill="#aaa"/><path d="M55 4.1h6M55 6.2h6" stroke="#ebebeb" stroke-width="0.6"/><rect x="66.2" y="2" width="6" height="6.3" fill="#555"/></svg>
<div class="a" style="left:124.8px;top:368.2px;width:59.3px;height:12px;background:rgba(100,200,168,0.93);border-radius:6px;box-shadow:1px 1.5px 1.5px rgba(0,0,0,0.18)"></div>
<div class="t" style="left:131px;top:371px;font-size:8.75px;color:#fff;">AVG(Total)</div>
</div>
</body></html>
